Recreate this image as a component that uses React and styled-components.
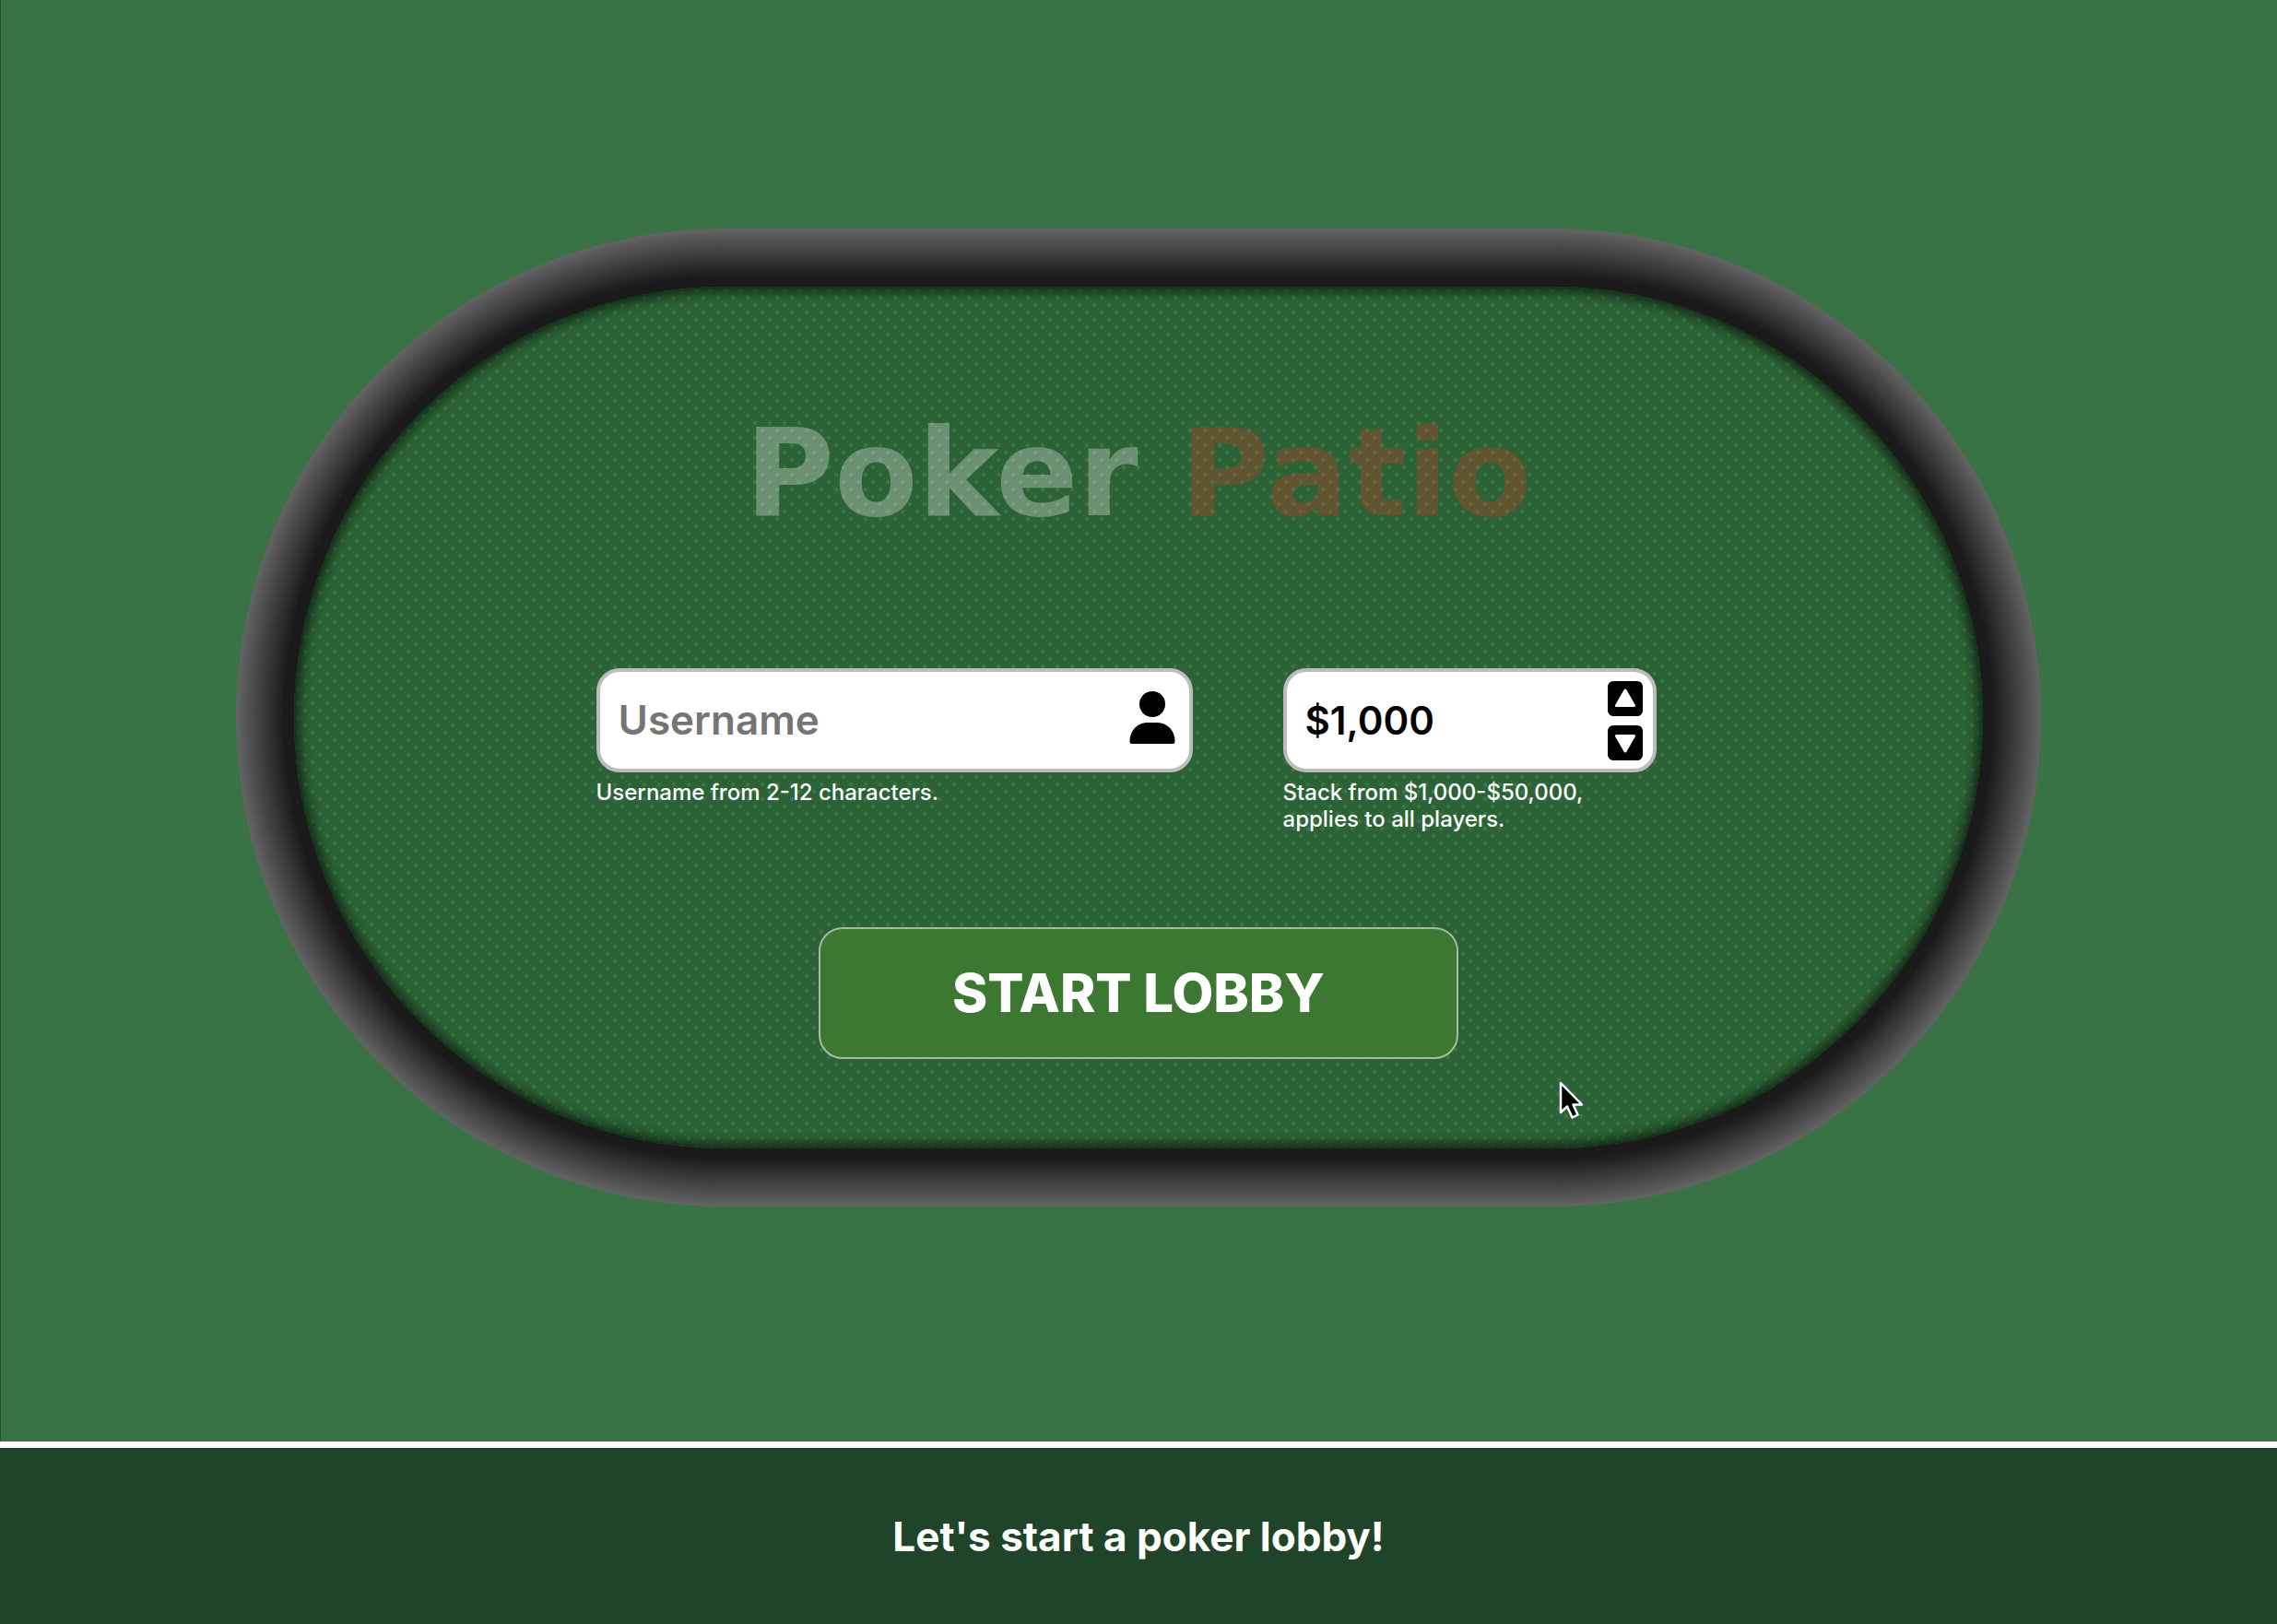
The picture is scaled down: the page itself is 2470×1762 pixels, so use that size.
import { useState } from 'react';
import styled, { createGlobalStyle } from 'styled-components';

const GlobalStyle = createGlobalStyle`
  * {
    box-sizing: border-box;
    margin: 0;
  }

  body {
    background-color: #387245;
    font-family: Inter, 'Open Sans', sans-serif;
    color: #fff;
  }

  button,
  input {
    font-family: inherit;
  }
`;

/* one thin ring per pixel, so the shading follows the curve of the table */
const railShadow = (width) =>
  Array.from({ length: width }, (_, i) => {
    const shade = Math.round(27 + Math.max(0, i - 10) * 1.4);
    return `0 0 0 ${i + 1}px rgb(${shade}, ${shade}, ${shade})`;
  }).join(', ');

const Page = styled.div`
  display: flex;
  flex-direction: column;
  min-height: 100vh;
  box-shadow: inset 1px 0 0 rgba(0, 0, 0, 0.3);
`;

const Main = styled.main`
  flex: 1;
  display: flex;
  align-items: center;
  justify-content: center;
  padding-bottom: 8px;
`;

const Table = styled.section`
  width: 79.25%;
  padding: 63px;
  border-radius: 9999px;
`;

const Felt = styled.div`
  display: flex;
  flex-direction: column;
  align-items: center;
  padding: 120px 0 97px;
  border-radius: 9999px;
  background-color: #2d6236;
  background-image: radial-gradient(circle at 4px 4px, #397a49 1px, transparent 3px),
    radial-gradient(circle at 12px 12px, #397a49 1px, transparent 3px);
  background-size: 16px 16px;
  box-shadow: inset 0 0 14px 4px #0b1f0e, ${railShadow(63)};
`;

const Title = styled.h1`
  font-family: 'DejaVu Sans', Inter, sans-serif;
  font-size: 132px;
  line-height: 164px;
  font-weight: 700;
  color: rgba(255, 255, 255, 0.3);
`;

const Accent = styled.span`
  color: rgba(218, 55, 41, 0.3);
`;

const Form = styled.form`
  display: flex;
  flex-direction: column;
  align-items: center;
  gap: 103px;
  margin-top: 130px;
`;

const Fields = styled.div`
  display: flex;
  align-items: flex-start;
  gap: 98px;
  padding-right: 27px;
`;

const Field = styled.div`
  width: ${({ $wide }) => ($wide ? '647px' : '405px')};
`;

const InputBox = styled.div`
  display: flex;
  align-items: center;
  height: 113px;
  padding: 0 ${({ $wide }) => ($wide ? '15px' : '11px')} 0 20px;
  border: 4px solid #bcbcbc;
  border-radius: 25px;
  background-color: #fff;
`;

const Input = styled.input`
  flex: 1;
  min-width: 0;
  padding: 0;
  border: none;
  outline: none;
  background: none;
  font-size: ${({ $large }) => ($large ? '44px' : '42px')};
  font-weight: 600;
  color: #000;

  &::placeholder {
    color: #757575;
    opacity: 1;
  }
`;

const Hint = styled.label`
  display: block;
  margin-top: 7px;
  font-size: 24px;
  line-height: 29px;
  font-weight: 500;
`;

const Stepper = styled.div`
  display: flex;
  flex-direction: column;
  gap: 10px;
  padding-top: 2px;
`;

const StepButton = styled.button`
  display: block;
  width: 38px;
  height: 38px;
  padding: 0;
  border: none;
  border-radius: 6px;
  background-color: #000;
  cursor: pointer;

  svg {
    display: block;
  }
`;

const StartButton = styled.button`
  width: 694px;
  height: 143px;
  border: 2px solid #a9b9a5;
  border-radius: 26px;
  background-color: #3c7832;
  font-size: 58px;
  font-weight: 800;
  color: #fff;
  cursor: pointer;
`;

const Footer = styled.footer`
  display: flex;
  align-items: center;
  justify-content: center;
  height: 198px;
  border-top: 7px solid #fff;
  background-color: #204429;
  font-size: 44px;
  line-height: 52px;
  font-weight: 700;
`;

const Pointer = styled.svg`
  position: absolute;
  left: 1689px;
  top: 1170px;
  pointer-events: none;
`;

function UserIcon() {
  return (
    <svg width="50" height="64" viewBox="0 0 50 64" aria-hidden="true">
      <circle cx="25" cy="15" r="14" />
      <path d="M2.500 58Q.5 58 .5 55.500C.5 43.500 9 35 20 35H30C41 35 49.500 43.500 49.500 55.500Q49.500 58 47.500 58Z" />
    </svg>
  );
}

function Triangle({ down }) {
  return (
    <svg width="38" height="38" viewBox="0 0 38 38" aria-hidden="true">
      <path
        d={down ? 'M9.500 11.500H28.500L19 28Z' : 'M9.500 26.500H28.500L19 10Z'}
        fill="#fff"
        stroke="#fff"
        strokeWidth="3"
        strokeLinejoin="round"
      />
    </svg>
  );
}

function App() {
  const [username, setUsername] = useState('');
  const [stack, setStack] = useState(1000);

  function changeStack(amount) {
    setStack((value) => Math.min(50000, Math.max(1000, value + amount)));
  }

  function handleStack(e) {
    setStack(Number(e.target.value.replace(/\D/g, '')));
  }

  return (
    <Page>
      <GlobalStyle />
      <Main>
        <Table>
          <Felt>
            <Title>
              Poker <Accent>Patio</Accent>
            </Title>
            <Form onSubmit={(e) => e.preventDefault()}>
              <Fields>
                <Field $wide>
                  <InputBox $wide>
                    <Input
                      $large
                      id="username"
                      placeholder="Username"
                      maxLength={12}
                      value={username}
                      onChange={(e) => setUsername(e.target.value)}
                    />
                    <UserIcon />
                  </InputBox>
                  <Hint htmlFor="username">Username from 2-12 characters.</Hint>
                </Field>
                <Field>
                  <InputBox>
                    <Input
                      id="stack"
                      value={`$${stack.toLocaleString('en-US')}`}
                      onChange={handleStack}
                    />
                    <Stepper>
                      <StepButton
                        type="button"
                        aria-label="Increase stack"
                        onClick={() => changeStack(1000)}
                      >
                        <Triangle />
                      </StepButton>
                      <StepButton
                        type="button"
                        aria-label="Decrease stack"
                        onClick={() => changeStack(-1000)}
                      >
                        <Triangle down />
                      </StepButton>
                    </Stepper>
                  </InputBox>
                  <Hint htmlFor="stack">
                    Stack from $1,000-$50,000,
                    <br />
                    applies to all players.
                  </Hint>
                </Field>
              </Fields>
              <StartButton>START LOBBY</StartButton>
            </Form>
          </Felt>
        </Table>
      </Main>
      <Footer>Let&apos;s start a poker lobby!</Footer>
      <Pointer width="32" height="46" viewBox="0 0 32 46" aria-hidden="true">
        <path
          d="M4 5V37L11 30.500L16.500 42.500L22.500 39.500L17.500 28.500H27Z"
          fill="#000"
          stroke="#fff"
          strokeWidth="2.500"
          strokeLinejoin="round"
        />
      </Pointer>
    </Page>
  );
}

export default App;
